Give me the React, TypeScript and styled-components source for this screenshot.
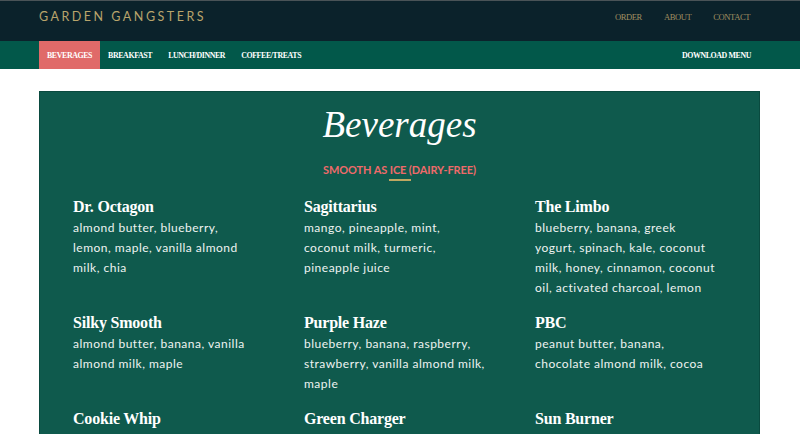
import React from "react";
import styled, { createGlobalStyle } from "styled-components";

const Global = createGlobalStyle`
  html, body { margin: 0; padding: 0; background: #ffffff; }
  body { overflow: hidden; }
  * { box-sizing: border-box; }
`;

const Page = styled.div`
  width: 800px;
  height: 434px;
  overflow: hidden;
  background: #ffffff;
`;

const TopBar = styled.header`
  height: 41px;
  background: #0b222b;
  border-top: 1px solid #4a5357;
  display: flex;
  align-items: flex-start;
  justify-content: space-between;
  padding: 0 50px 0 39px;
`;

const Logo = styled.div`
  font-family: "Lato", "Noto Sans", sans-serif;
  font-size: 12.5px;
  font-weight: 400;
  letter-spacing: 2.5px;
  color: #b9a46b;
  margin-top: 8px;
  line-height: 16px;
`;

const TopNav = styled.nav`
  display: flex;
  gap: 22px;
  margin-top: 10px;
`;

const TopLink = styled.a`
  font-family: "Liberation Serif", serif;
  font-size: 8.6px;
  letter-spacing: -0.45px;
  color: #a08e60;
  text-decoration: none;
  line-height: 12px;
`;

const SubBar = styled.nav`
  height: 28px;
  background: #02584a;
  display: flex;
  align-items: stretch;
  padding: 0 41px 0 39px;
`;

const Tab = styled.a<{ $active?: boolean }>`
  display: flex;
  align-items: center;
  padding: 0 8px;
  font-family: "Liberation Serif", serif;
  font-weight: 700;
  font-size: 7.9px;
  letter-spacing: -0.4px;
  color: #ffffff;
  text-decoration: none;
  background: ${(p) => (p.$active ? "#e06a69" : "transparent")};
`;

const Spacer = styled.div`
  flex: 1;
`;

const Main = styled.main`
  padding: 22px 40px 0 39px;
`;

const Card = styled.section`
  background: #0f5a4d;
  border: 1px solid #0a4a3f;
  padding: 13px 0 40px 33px;
`;

const Title = styled.h1`
  margin: 0;
  text-align: center;
  font-family: "Liberation Serif", serif;
  font-style: italic;
  font-weight: 400;
  font-size: 37px;
  line-height: 40px;
  color: #ffffff;
  padding-right: 33px;
`;

const Sub = styled.h2`
  margin: 18px 0 0;
  text-align: center;
  font-family: "Lato", "Noto Sans", sans-serif;
  font-weight: 700;
  font-size: 11px;
  line-height: 14px;
  color: #ee6a6a;
  padding-right: 33px;
  letter-spacing: -0.1px;
`;

const Rule = styled.div`
  width: 22px;
  height: 2px;
  background: #c0a761;
  margin: 2px auto 0;
  position: relative;
  left: -16px;
`;

const Grid = styled.div`
  display: grid;
  grid-template-columns: repeat(3, 231px);
  row-gap: 15px;
  margin-top: 16px;
`;

const Item = styled.div`
  width: 200px;
`;

const Name = styled.h3`
  margin: 0;
  font-family: "Liberation Serif", serif;
  font-weight: 700;
  font-size: 16px;
  line-height: 20px;
  color: #ffffff;
  letter-spacing: -0.2px;
`;

const Desc = styled.p`
  margin: 1px 0 0;
  font-family: "Lato", "Noto Sans", sans-serif;
  font-size: 12px;
  line-height: 20px;
  letter-spacing: 0.5px;
  color: #eef3f1;
`;

const Line = styled.span`
  display: block;
  white-space: nowrap;
`;

const items: { n: string; d: string[] }[] = [
  { n: "Dr. Octagon", d: ["almond butter, blueberry,", "lemon, maple, vanilla almond", "milk, chia"] },
  { n: "Sagittarius", d: ["mango, pineapple, mint,", "coconut milk, turmeric,", "pineapple juice"] },
  { n: "The Limbo", d: ["blueberry, banana, greek", "yogurt, spinach, kale, coconut", "milk, honey, cinnamon, coconut", "oil, activated charcoal, lemon"] },
  { n: "Silky Smooth", d: ["almond butter, banana, vanilla", "almond milk, maple"] },
  { n: "Purple Haze", d: ["blueberry, banana, raspberry,", "strawberry, vanilla almond milk,", "maple"] },
  { n: "PBC", d: ["peanut butter, banana,", "chocolate almond milk, cocoa"] },
  { n: "Cookie Whip", d: ["almond butter, banana, cacao,", "dates, almond milk"] },
  { n: "Green Charger", d: ["spinach, kale, banana,", "mango, coconut water"] },
  { n: "Sun Burner", d: ["pineapple, mango, ginger,", "orange juice, turmeric"] },
];

export default function App() {
  return (
    <Page>
      <Global />
      <TopBar>
        <Logo>GARDEN GANGSTERS</Logo>
        <TopNav>
          <TopLink>ORDER</TopLink>
          <TopLink>ABOUT</TopLink>
          <TopLink>CONTACT</TopLink>
        </TopNav>
      </TopBar>
      <SubBar>
        <Tab $active>BEVERAGES</Tab>
        <Tab>BREAKFAST</Tab>
        <Tab>LUNCH/DINNER</Tab>
        <Tab>COFFEE/TREATS</Tab>
        <Spacer />
        <Tab>DOWNLOAD MENU</Tab>
      </SubBar>
      <Main>
        <Card>
          <Title>Beverages</Title>
          <Sub>SMOOTH AS ICE (DAIRY-FREE)</Sub>
          <Rule />
          <Grid>
            {items.map((it) => (
              <Item key={it.n}>
                <Name>{it.n}</Name>
                <Desc>
                  {it.d.map((l) => (
                    <Line key={l}>{l}</Line>
                  ))}
                </Desc>
              </Item>
            ))}
          </Grid>
        </Card>
      </Main>
    </Page>
  );
}
